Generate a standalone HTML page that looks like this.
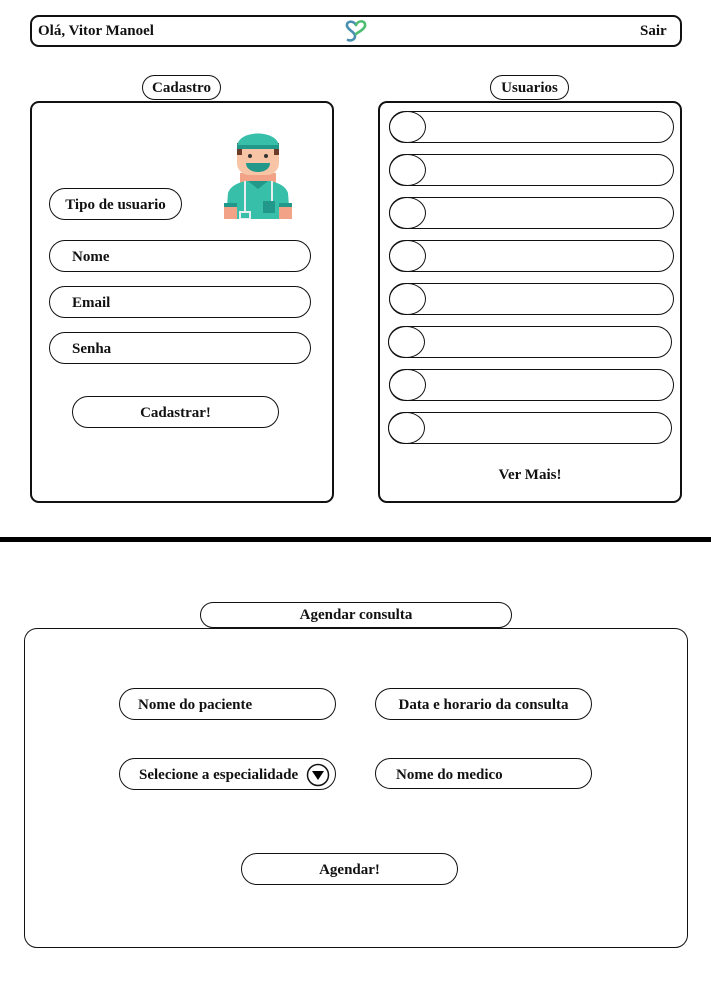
<!DOCTYPE html>
<html><head><meta charset="utf-8"><style>
*{margin:0;padding:0;box-sizing:border-box}
body{width:711px;height:988px;background:#fff;position:relative;overflow:hidden;font-family:"Liberation Serif",serif;font-weight:bold;font-size:15px;color:#111}
.a{position:absolute}
.p{position:absolute;border:1px solid #111;border-radius:16px;background:#fff;display:flex;align-items:center;padding-top:3px}
.c{justify-content:center}
.row{position:absolute;border:1px solid #111;border-radius:16px;height:32px}
.row i{position:absolute;left:-1px;top:-1px;width:37px;height:32px;border:1px solid #111;border-radius:50%;background:#fff}
</style></head><body>
<div class="a" style="left:30px;top:15px;width:652px;height:32px;border:2px solid #111;border-radius:9px"></div>
<div class="a" style="left:38px;top:23px;font-size:15px">Olá, Vitor Manoel</div>
<div class="a" style="left:640px;top:23px;font-size:15px">Sair</div>
<svg class="a" style="left:343px;top:17px" width="26" height="27" viewBox="0 0 26 27">
<path d="M13 8 C10 3,3 4,4 9 C5 13,12 15,12 19 C12 23,8 24,5 23" fill="none" stroke="#4a8fb0" stroke-width="2.6" stroke-linecap="round"/>
<path d="M13 8 C15 3,23 3,22 9 C21 13,15 15,13 17" fill="none" stroke="#4dbd72" stroke-width="2.6" stroke-linecap="round"/>
</svg>

<div class="p c" style="left:142px;top:75px;width:79px;height:25px;border-radius:13px;padding-top:1px">Cadastro</div>
<div class="a" style="left:30px;top:101px;width:304px;height:402px;border:2px solid #111;border-radius:9px"></div>
<div class="p c" style="left:49px;top:188px;width:133px;height:32px">Tipo de usuario</div>
<svg class="a" style="left:222px;top:125px" width="72" height="94" viewBox="0 0 72 94">
<rect x="18" y="48" width="36" height="46" fill="#f2a387"/>
<path d="M4 94 L6 68 C8 62,14 58,24 56 L48 56 C58 58,64 62,66 68 L68 94 Z" fill="#37bfa9"/>
<rect x="2" y="80" width="13" height="14" fill="#f2a387"/><rect x="57" y="80" width="13" height="14" fill="#f2a387"/>
<rect x="2" y="78" width="13" height="4" fill="#22988a"/><rect x="57" y="78" width="13" height="4" fill="#22988a"/>
<path d="M26 56 L36 64 L46 56" fill="#22988a"/>
<rect x="41" y="76" width="12" height="12" fill="#22988a"/>
<path d="M23 56 L23 88 M50 56 L50 76" stroke="#e8eef0" stroke-width="2" fill="none"/>
<rect x="18" y="87" width="10" height="7" fill="none" stroke="#e8eef0" stroke-width="2"/>
<rect x="15" y="16" width="42" height="34" rx="12" fill="#f7c4a6"/>
<rect x="15" y="18" width="5" height="12" fill="#6b3b2a"/><rect x="52" y="18" width="5" height="12" fill="#6b3b2a"/>
<path d="M15 22 C15 4,57 4,57 22 Z" fill="#37bfa9"/>
<path d="M15 20 L57 20 L57 24 L15 24 Z" fill="#22988a"/>
<circle cx="28" cy="31" r="2" fill="#333"/><circle cx="44" cy="31" r="2" fill="#333"/>
<path d="M24 38 C24 50,48 50,48 38 Z" fill="#22988a"/>
</svg>
<div class="p" style="left:49px;top:240px;width:262px;height:32px;padding-left:22px">Nome</div>
<div class="p" style="left:49px;top:286px;width:262px;height:32px;padding-left:22px">Email</div>
<div class="p" style="left:49px;top:332px;width:262px;height:32px;padding-left:22px">Senha</div>
<div class="p c" style="left:72px;top:396px;width:207px;height:32px">Cadastrar!</div>

<div class="p c" style="left:490px;top:75px;width:79px;height:25px;border-radius:13px;padding-top:1px">Usuarios</div>
<div class="a" style="left:378px;top:101px;width:304px;height:402px;border:2px solid #111;border-radius:9px"></div>
<div class="row" style="left:389px;top:111px;width:285px"><i></i></div>
<div class="row" style="left:389px;top:154px;width:285px"><i></i></div>
<div class="row" style="left:389px;top:197px;width:285px"><i></i></div>
<div class="row" style="left:389px;top:240px;width:285px"><i></i></div>
<div class="row" style="left:389px;top:283px;width:285px"><i></i></div>
<div class="row" style="left:388px;top:326px;width:284px"><i></i></div>
<div class="row" style="left:389px;top:369px;width:285px"><i></i></div>
<div class="row" style="left:388px;top:412px;width:284px"><i></i></div>
<div class="a" style="left:378px;top:467px;width:304px;text-align:center;font-size:15px">Ver Mais!</div>

<div class="a" style="left:0;top:537px;width:711px;height:5px;background:#000"></div>

<div class="p c" style="left:200px;top:602px;width:312px;height:26px;border-radius:13px;padding-top:1px">Agendar consulta</div>
<div class="a" style="left:24px;top:628px;width:664px;height:320px;border:1px solid #111;border-radius:13px"></div>
<div class="p" style="left:119px;top:688px;width:217px;height:32px;padding-left:18px">Nome do paciente</div>
<div class="p c" style="left:375px;top:688px;width:217px;height:32px">Data e horario da consulta</div>
<div class="p" style="left:119px;top:758px;width:217px;height:32px;padding-left:19px">Selecione a especialidade
<svg class="a" style="left:186px;top:4px" width="24" height="24" viewBox="0 0 24 24"><circle cx="12" cy="12" r="10.5" fill="none" stroke="#111" stroke-width="1.5"/><path d="M6 8 L18 8 L12 17 Z" fill="#000"/></svg></div>
<div class="p" style="left:375px;top:758px;width:217px;height:31px;padding-left:20px">Nome do medico</div>
<div class="p c" style="left:241px;top:853px;width:217px;height:32px">Agendar!</div>
</body></html>
